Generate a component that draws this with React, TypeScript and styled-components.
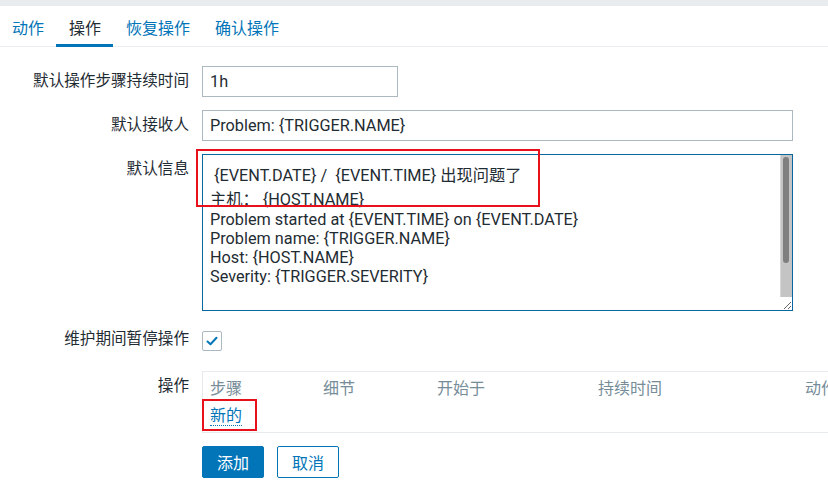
import React from "react";
import styled, { createGlobalStyle } from "styled-components";

const FONT = `Roboto, "Noto Sans CJK SC", sans-serif`;

const GlobalStyle = createGlobalStyle`
  html, body {
    margin: 0;
    padding: 0;
    background: #ffffff;
    overflow: hidden;
  }
  body {
    font-family: ${FONT};
    font-size: 16px;
    color: #1f2c33;
  }
`;

const Page = styled.div`
  width: 828px;
  height: 490px;
  overflow: hidden;
`;

const TopStrip = styled.div`
  height: 6px;
  background: #e9ecef;
`;

const TabNav = styled.nav`
  display: flex;
  height: 40px;
  border-bottom: 1px solid #ebeef0;
  margin-left: -1px;
`;

const Tab = styled.a<{ $active?: boolean }>`
  display: flex;
  align-items: center;
  padding: 0 12px 0 13px;
  box-sizing: border-box;
  height: 41px;
  margin-bottom: -1px;
  font-size: 16px;
  text-decoration: none;
  cursor: pointer;
  color: ${(p) => (p.$active ? "#1f2c33" : "#0275b8")};
  box-shadow: ${(p) => (p.$active ? "inset 0 -3px 0 #0275b8" : "none")};
`;

const Form = styled.div`
  display: grid;
  grid-template-columns: 189px 1fr;
  column-gap: 13px;
  row-gap: 13px;
  padding-top: 19px;
  align-items: start;
`;

const Label = styled.label`
  text-align: right;
  line-height: 31px;
  font-size: 15.6px;
  color: #1f2c33;
  white-space: nowrap;
`;

const Field = styled.div<{ $minHeight?: number }>`
  position: relative;
  display: flex;
  align-items: center;
  min-height: ${(p) => p.$minHeight ?? 31}px;
`;

const TextInput = styled.input<{ $width: number }>`
  box-sizing: border-box;
  width: ${(p) => p.$width}px;
  height: 31px;
  border: 1px solid #acb8bf;
  padding: 0 7px;
  font-family: ${FONT};
  font-size: 16.25px;
  color: #1f2c33;
  background: #fff;
  outline: none;
`;

const TextArea = styled.textarea`
  box-sizing: border-box;
  width: 591px;
  height: 157px;
  border: 1px solid #0a66a0;
  padding: 7px 20px 4px 7px;
  font-family: ${FONT};
  font-size: 16.25px;
  line-height: normal;
  color: #1f2c33;
  background: #fff;
  outline: none;
  resize: both;
  overflow: hidden;
  display: block;
`;

const ScrollTrack = styled.div`
  position: absolute;
  top: 1px;
  left: 578px;
  width: 12px;
  height: 142px;
  background: #c4c4c4;
  border-left: 1px solid #d6d6d6;
  box-sizing: border-box;
  pointer-events: none;
`;

const ScrollThumb = styled.div`
  position: absolute;
  top: 2px;
  left: 2px;
  width: 6px;
  height: 106px;
  border-radius: 3px;
  background: #7f7f7f;
`;

const Highlight = styled.div<{ $top: number; $left: number; $w: number; $h: number }>`
  position: absolute;
  top: ${(p) => p.$top}px;
  left: ${(p) => p.$left}px;
  width: ${(p) => p.$w}px;
  height: ${(p) => p.$h}px;
  border: 2px solid #e8101a;
  box-sizing: border-box;
  pointer-events: none;
`;

const CheckBox = styled.span`
  box-sizing: border-box;
  width: 20px;
  height: 20px;
  border: 1px solid #acb8bf;
  border-radius: 2px;
  display: flex;
  align-items: center;
  justify-content: center;
  background: #fff;
`;

const OpsTable = styled.div`
  position: relative;
  width: 700px;
  border-top: 1px solid #e6eaec;
  border-left: 1px solid #e6eaec;
  border-bottom: 1px solid #e6eaec;
`;

const TableRow = styled.div<{ $head?: boolean }>`
  display: grid;
  grid-template-columns: 113px 114px 161px 207px 1fr;
  height: ${(p) => (p.$head ? "28px" : "32px")};
  align-items: ${(p) => (p.$head ? "end" : "start")};
`;

const HeadCell = styled.div`
  padding: 0 7px;
  color: #768d99;
  font-size: 16px;
  line-height: 22px;
  white-space: nowrap;
`;

const BodyCell = styled.div`
  position: relative;
  padding: 5px 7px 0;
  line-height: 22px;
`;

const NewLink = styled.a`
  color: #0275b8;
  text-decoration: none;
  border-bottom: 1px dotted #0275b8;
  font-size: 16px;
  cursor: pointer;
`;

const Buttons = styled.div`
  display: flex;
  gap: 13px;
  grid-column: 2;
`;

const Button = styled.button<{ $primary?: boolean }>`
  box-sizing: border-box;
  width: 62px;
  height: 32px;
  border-radius: 2px;
  border: 1px solid #0275b8;
  background: ${(p) => (p.$primary ? "#0275b8" : "#ffffff")};
  color: ${(p) => (p.$primary ? "#ffffff" : "#0275b8")};
  font-family: ${FONT};
  font-size: 16px;
  padding: 0;
  cursor: pointer;
`;

const message =
  " {EVENT.DATE} /  {EVENT.TIME} 出现问题了\n主机： {HOST.NAME}\nProblem started at {EVENT.TIME} on {EVENT.DATE}\nProblem name: {TRIGGER.NAME}\nHost: {HOST.NAME}\nSeverity: {TRIGGER.SEVERITY}";

export default function App() {
  return (
    <Page>
      <GlobalStyle />
      <TopStrip />
      <TabNav>
        <Tab>动作</Tab>
        <Tab $active>操作</Tab>
        <Tab>恢复操作</Tab>
        <Tab>确认操作</Tab>
      </TabNav>
      <Form>
        <Label>默认操作步骤持续时间</Label>
        <Field>
          <TextInput $width={196} defaultValue="1h" />
        </Field>

        <Label>默认接收人</Label>
        <Field>
          <TextInput $width={591} defaultValue="Problem: {TRIGGER.NAME}" />
        </Field>

        <Label>默认信息</Label>
        <Field>
          <TextArea defaultValue={message} spellCheck={false} />
          <ScrollTrack>
            <ScrollThumb />
          </ScrollTrack>
          <Highlight $top={-5} $left={-6} $w={344} $h={58} />
        </Field>

        <Label>维护期间暂停操作</Label>
        <Field $minHeight={34}>
          <CheckBox>
            <svg width="14" height="14" viewBox="0 0 14 14">
              <polyline
                points="2.5,7.5 5.5,10.2 11.5,3.8"
                fill="none"
                stroke="#0275b8"
                strokeWidth="2"
                strokeLinecap="round"
                strokeLinejoin="round"
              />
            </svg>
          </CheckBox>
        </Field>

        <Label>操作</Label>
        <Field>
          <OpsTable>
            <TableRow $head>
              <HeadCell>步骤</HeadCell>
              <HeadCell>细节</HeadCell>
              <HeadCell>开始于</HeadCell>
              <HeadCell>持续时间</HeadCell>
              <HeadCell>动作</HeadCell>
            </TableRow>
            <TableRow>
              <BodyCell>
                <NewLink>新的</NewLink>
              </BodyCell>
            </TableRow>
            <Highlight $top={27} $left={-1} $w={55} $h={32} />
          </OpsTable>
        </Field>

        <Buttons>
          <Button $primary>添加</Button>
          <Button>取消</Button>
        </Buttons>
      </Form>
    </Page>
  );
}
